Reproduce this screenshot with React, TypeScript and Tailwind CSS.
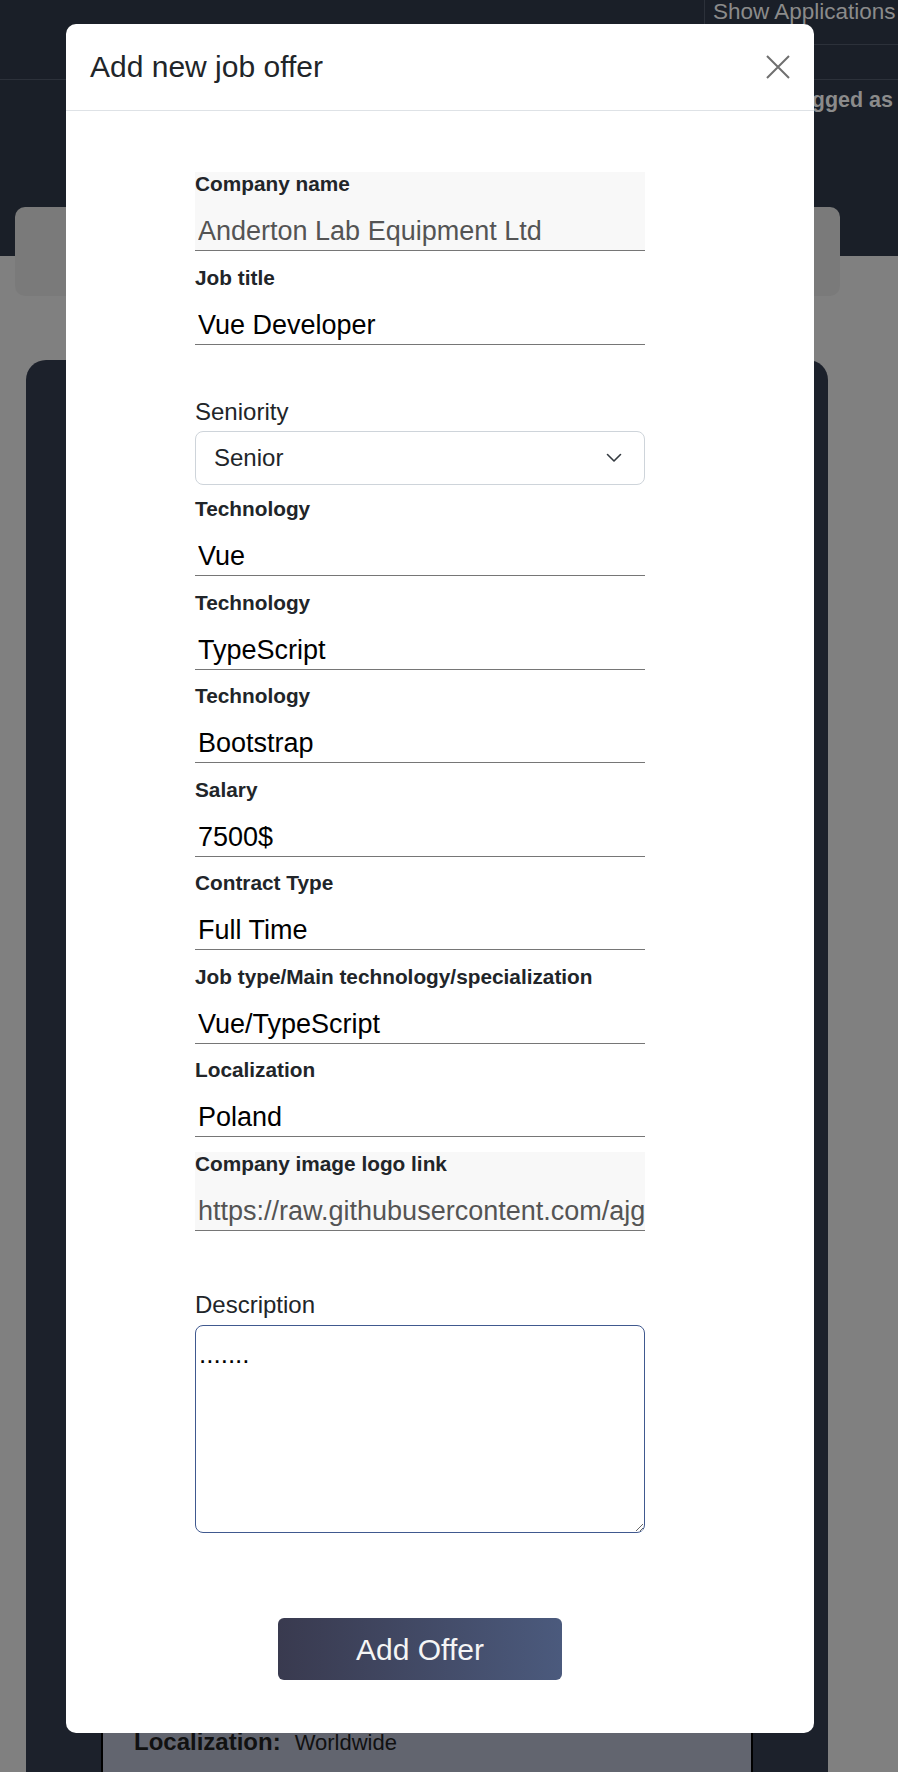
import clsx from 'clsx';

const font = "font-['Liberation_Sans',Arial,Helvetica,sans-serif]";

function Field({ label, value, muted }: { label: string; value: string; muted?: boolean }) {
  return (
    <div className={clsx('flex flex-col', muted && 'bg-[#f8f8f8]')}>
      <label className="text-[20.8px] font-bold leading-[24px] text-[#212529]">{label}</label>
      <input
        readOnly
        value={value}
        className={clsx(
          'h-[55px] w-full border-b border-[#767676] bg-transparent pl-[3px] pt-[17px] text-[27px] outline-none',
          muted ? 'text-[#545454]' : 'text-black'
        )}
      />
    </div>
  );
}

function CloseIcon() {
  return (
    <svg width="24" height="24" viewBox="0 0 24 24" fill="none" stroke="#6f6f6f" strokeWidth="2">
      <path d="M1 1 L23 23 M23 1 L1 23" />
    </svg>
  );
}

function Chevron() {
  return (
    <svg width="16" height="10" viewBox="0 0 16 10" fill="none" stroke="#343a40" strokeWidth="1.6" strokeLinecap="round" strokeLinejoin="round">
      <path d="M1.5 1.5 L8 8 L14.5 1.5" />
    </svg>
  );
}

export default function App() {
  return (
    <div className={clsx('relative h-[1772px] w-full overflow-hidden bg-[#808080]', font)}>
      {/* page behind the backdrop */}
      <div className="h-[256px] bg-[#1a1f28]">
        <div className="flex h-[80px] border-b border-[#2c313a]">
          <div className="flex-1" />
          <div className="h-[45px] w-[194px] overflow-hidden whitespace-nowrap border-b border-l border-[#2c313a] pl-[8px] text-[22.5px] leading-[24px] text-[#8b8b8b]">
            Show Applications
          </div>
        </div>
        <div className="flex justify-end whitespace-nowrap pr-[5px] pt-[6px] text-[21.5px] font-bold leading-[28px] text-[#8b8b8b]">
          Logged as
        </div>
      </div>
      <div className="mx-[15px] -mt-[49px] h-[89px] w-[825px] rounded-[10px] bg-[#7a7a7a]" />
      <div className="ml-[26px] mt-[64px] h-[1500px] w-[802px] rounded-t-[20px] bg-[#1c212b] pt-[60px]">
        <div className="ml-[75px] h-full w-[652px] border-x-2 border-black bg-[#62656f]">
          <div className="h-[1308px]" />
          <div className="flex items-baseline gap-[14px] pl-[31px] leading-[28px] text-[#111]">
            <span className="text-[24px] font-bold">Localization:</span>
            <span className="text-[22px]">Worldwide</span>
          </div>
        </div>
      </div>

      {/* modal */}
      <div className="absolute left-[66px] top-[24px] flex h-[1709px] w-[748px] flex-col rounded-[10px] bg-white">
        <div className="flex h-[87px] items-center justify-between border-b border-[#dee2e6] pl-[24px] pr-[24px]">
          <h2 className="text-[30px] leading-[36px] text-[#212529]">Add new job offer</h2>
          <CloseIcon />
        </div>
        <div className="ml-[129px] flex w-[450px] flex-col pt-[61px]">
          <div className="flex flex-col gap-[14.5px]">
            <Field label="Company name" value="Anderton Lab Equipment Ltd" muted />
            <Field label="Job title" value="Vue Developer" />
          </div>
          <label className="mt-[53.5px] text-[24px] leading-[28px] text-[#212529]">Seniority</label>
          <div className="relative mt-[5px]">
            <select
              defaultValue="Senior"
              className="h-[54px] w-full appearance-none rounded-[8px] border border-[#ced4da] bg-white pl-[18px] text-[24px] text-[#212529] outline-none"
            >
              <option>Junior</option>
              <option>Mid</option>
              <option>Senior</option>
            </select>
            <div className="pointer-events-none absolute right-[23px] top-[22px]">
              <Chevron />
            </div>
          </div>
          <div className="mt-[12px] flex flex-col gap-[14.5px]">
            <Field label="Technology" value="Vue" />
            <Field label="Technology" value="TypeScript" />
            <Field label="Technology" value="Bootstrap" />
            <Field label="Salary" value="7500$" />
            <Field label="Contract Type" value="Full Time" />
            <Field label="Job type/Main technology/specialization" value="Vue/TypeScript" />
            <Field label="Localization" value="Poland" />
            <Field
              label="Company image logo link"
              value="https://raw.githubusercontent.com/ajgrabowski/job-board/main/logos/anderton.png"
              muted
            />
          </div>
          <label className="mt-[60.5px] text-[24px] leading-[28px] text-[#212529]">Description</label>
          <textarea
            defaultValue="......."
            className="mt-[6px] h-[208px] w-full rounded-[8px] border border-[#40598f] pl-[3px] pt-[9px] text-[26px] text-black outline-none"
          />
          <button className="mx-auto mt-[85px] h-[62px] w-[284px] rounded-[6px] bg-linear-to-r from-[#393a4f] to-[#4b5a7d] text-[30px] text-[#f5f5f5]">
            Add Offer
          </button>
        </div>
      </div>
    </div>
  );
}
